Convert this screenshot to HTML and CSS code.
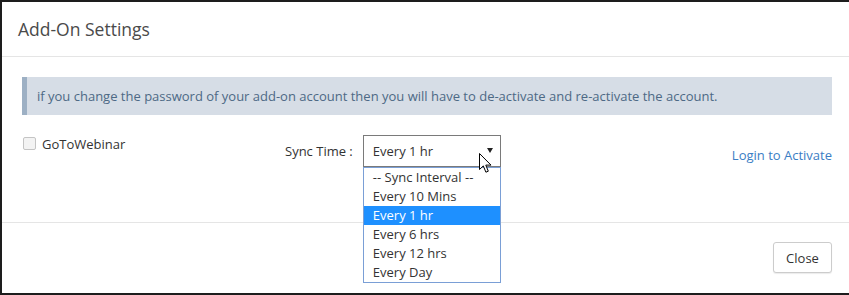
FILE: index.html
```html
<!DOCTYPE html>
<html lang="en">
<head>
    <meta charset="UTF-8">
    <title>Add-On Settings</title>
    <link rel="stylesheet" href="styles.css">
</head>
<body>
    <div class="modal">
        <div class="modal-header">
            <h4 class="modal-title">Add-On Settings</h4>
        </div>
        <div class="modal-body">
            <div class="alert">if you change the password of your add-on account then you will have to de-activate and re-activate the account.</div>
            <div class="addon-row">
                <label class="addon-name">
                    <span class="checkbox"></span>
                    GoToWebinar
                </label>
                <span class="sync-label">Sync Time :</span>
                <div class="select-wrap">
                    <div class="select">
                        <span>Every 1 hr</span>
                        <span class="caret"></span>
                    </div>
                    <ul class="options">
                        <li>-- Sync Interval --</li>
                        <li>Every 10 Mins</li>
                        <li class="selected">Every 1 hr</li>
                        <li>Every 6 hrs</li>
                        <li>Every 12 hrs</li>
                        <li>Every Day</li>
                    </ul>
                    <svg class="cursor" width="13" height="21" viewBox="0 0 13 21" xmlns="http://www.w3.org/2000/svg">
                        <path d="M0.5 0.5 L0.5 16.5 L4.3 12.9 L6.9 19.2 L9.3 18.2 L6.8 12.1 L12 12.1 Z" fill="#fff" stroke="#000" stroke-width="1"/>
                    </svg>
                </div>
                <a class="login-link" href="#">Login to Activate</a>
            </div>
        </div>
        <div class="modal-footer">
            <button class="btn">Close</button>
        </div>
    </div>
</body>
</html>
```

FILE: styles.css
```css
html, body {
    overflow: hidden;
}
body {
    margin: 0;
    background-color: #1d1d1d;
    font-family: "Open Sans", "Liberation Sans", sans-serif;
    font-size: 13px;
    color: #333;
}
.modal {
    margin: 2px -20px 0 2px;
    width: 850px;
    height: 291px;
    background-color: #fff;
    display: flex;
    flex-direction: column;
}
.modal-header {
    padding: 14px 16px;
    border-bottom: 1px solid #e5e5e5;
}
.modal-title {
    margin: 0;
    font-size: 17.5px;
    font-weight: normal;
    line-height: 26px;
    color: #4a4a4a;
}
.modal-body {
    padding: 20px 20px 0 20px;
    height: 145px;
    border-bottom: 1px solid #e5e5e5;
}
.alert {
    background-color: #d6dde6;
    border-left: 5px solid #9db0c4;
    color: #4d6985;
    padding: 10px 10px;
    line-height: 18px;
}
.addon-row {
    display: flex;
    margin-top: 20px;
}
.addon-name {
    width: 263px;
    line-height: 18px;
    display: flex;
    align-items: flex-start;
}
.checkbox {
    width: 11px;
    height: 11px;
    border: 1px solid #c4c4c4;
    border-radius: 2px;
    background-color: #f3f3f3;
    margin: 2px 6px 0 1px;
}
.sync-label {
    line-height: 32px;
    margin-right: 10px;
}
.select-wrap {
    position: relative;
}
.select {
    box-sizing: border-box;
    width: 138px;
    height: 32px;
    border: 1px solid #7a7a7a;
    padding: 0 9px;
    display: flex;
    justify-content: space-between;
    align-items: center;
    font-size: 13px;
}
.caret {
    width: 0;
    height: 0;
    border-left: 3px solid transparent;
    border-right: 3px solid transparent;
    border-top: 5px solid #222;
    margin-right: -2px;
    margin-top: -2px;
}
.options {
    position: absolute;
    top: 32px;
    left: 0;
    box-sizing: border-box;
    width: 138px;
    margin: 0;
    padding: 0;
    list-style: none;
    background-color: #fff;
    border: 1px solid #7a9fd6;
    z-index: 10;
}
.options li {
    height: 19px;
    line-height: 19px;
    padding: 0 9px;
}
.options li.selected {
    background-color: #1e90ff;
    color: #fff;
}
.cursor {
    position: absolute;
    left: 116px;
    top: 18px;
    z-index: 20;
}
.login-link {
    margin-left: auto;
    margin-top: 10px;
    line-height: 20px;
    color: #3b7dc4;
    text-decoration: none;
}
.modal-footer {
    padding: 19px 20px;
    display: flex;
    justify-content: flex-end;
}
.btn {
    font-family: "Open Sans", "Liberation Sans", sans-serif;
    font-size: 13px;
    color: #333;
    background-color: #fff;
    border: 1px solid #ccc;
    border-radius: 3px;
    width: 59px;
    height: 31px;
    box-shadow: 0 1px 1px rgba(0, 0, 0, 0.08);
}
```
